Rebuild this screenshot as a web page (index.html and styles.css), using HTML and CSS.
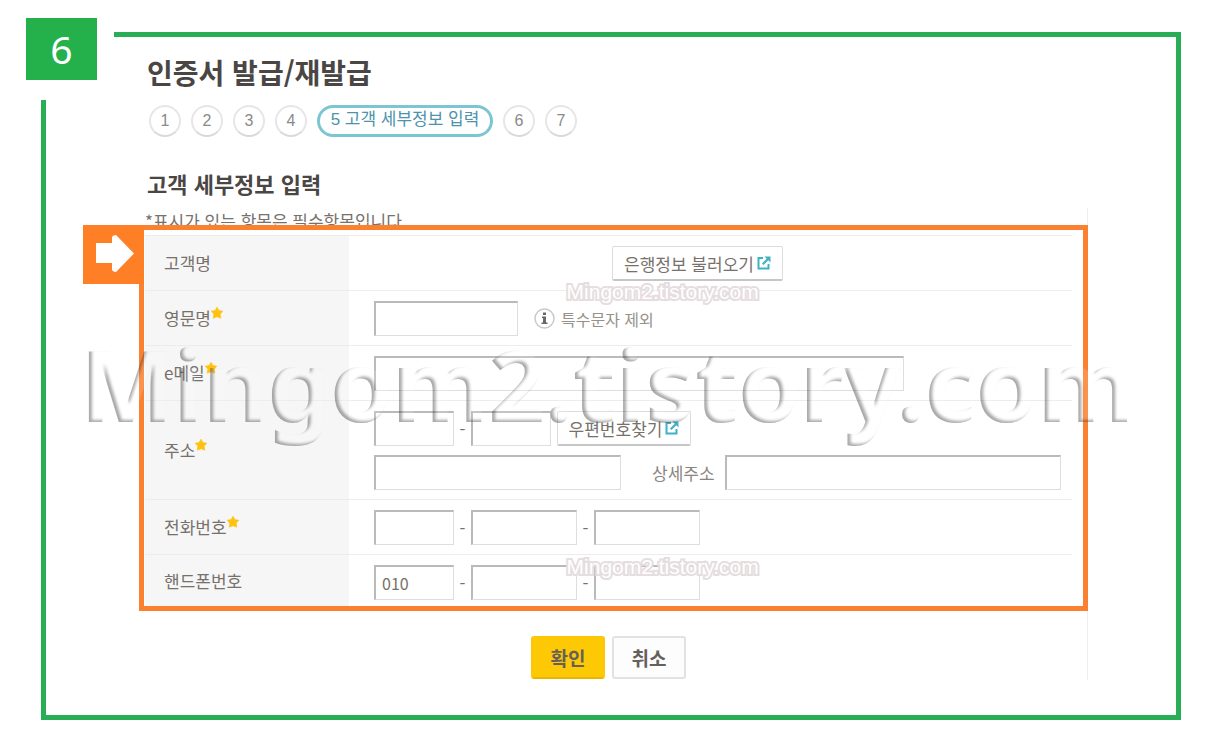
FILE: index.html
```
<!DOCTYPE html>
<html lang="ko">
<head>
	<meta charset="UTF-8">
	<title>인증서 발급/재발급</title>
	<link rel="stylesheet" href="styles.css">
</head>
<body>
	<svg class="defs" width="0" height="0" aria-hidden="true">
		<defs>
			<!-- 글자 안쪽 왼쪽/아래 그림자 -->
			<filter id="emboss" x="-2%" y="-5%" width="104%" height="110%" color-interpolation-filters="sRGB">
				<feGaussianBlur in="SourceAlpha" stdDeviation="1.5" result="blur"/>
				<feOffset in="blur" dx="3" dy="-2" result="moved"/>
				<feComposite in="SourceAlpha" in2="moved" operator="out" result="edge"/>
				<feFlood flood-color="#000" flood-opacity="0.34"/>
				<feComposite in2="edge" operator="in" result="dark"/>
				<feFlood flood-color="#fff" flood-opacity="0.15"/>
				<feComposite in2="SourceAlpha" operator="in" result="face"/>
				<feMerge>
					<feMergeNode in="face"/>
					<feMergeNode in="dark"/>
				</feMerge>
			</filter>
			<symbol id="star" viewBox="0 0 12 12">
				<path d="M6 .2 7.900 3.500 11.800 4.200 9.200 7.100 9.800 11.200 6 9.700 2.200 11.200 2.800 7.100 .2 4.200 4.100 3.500z" fill="#ffc20e" stroke="#ffc20e" stroke-linejoin="round" stroke-width=".6"/>
			</symbol>
			<symbol id="popup" viewBox="0 0 14 14">
				<path d="M6 2H1.500v10.500H11.500V8" fill="none" stroke="#3fb1c4" stroke-width="2"/>
				<path d="M7.500 0.500H13.500V6.500L11.300 4.300 6.500 9 5 7.500 9.700 2.700z" fill="#3fb1c4"/>
			</symbol>
		</defs>
	</svg>

	<div class="frame">
		<div class="badge"><span>6</span></div>

		<h1>인증서 발급/재발급</h1>
		<ol class="steps">
			<li>1</li>
			<li>2</li>
			<li>3</li>
			<li>4</li>
			<li class="on">5 고객 세부정보 입력</li>
			<li>6</li>
			<li>7</li>
		</ol>
		<h2>고객 세부정보 입력</h2>

		<form class="sheet">
			<p class="notice">*표시가 있는 항목은 필수항목입니다</p>

			<div class="box">
				<div class="pointer">
					<svg width="38" height="37" viewBox="0 0 38 37"><path d="M0 8H16V2Q17 0 20 0L38 18.500 20 37Q17 37 16 35V28H0z" fill="#fff"/></svg>
				</div>
				<table>
					<tr>
						<th scope="row">고객명</th>
						<td>
							<div class="fields">
								<button type="button" class="btn load">은행정보 불러오기<svg width="14" height="14"><use href="#popup"/></svg></button>
							</div>
						</td>
					</tr>
					<tr>
						<th scope="row"><label for="eng-name">영문명<svg class="star" width="12" height="12"><use href="#star"/></svg></label></th>
						<td>
							<div class="fields">
								<input type="text" id="eng-name" class="w-name">
								<span class="tip">
									<svg width="21" height="21" viewBox="0 0 21 21"><circle cx="10.500" cy="10.500" r="9.500" fill="#fff" stroke="#c9c9c9" stroke-width="1.500"/><path d="M9 4.500h3v2.500H9zM8 8.500h4v6h1.500V16H7.500v-1.500H9V10H8z" fill="#6d6864"/></svg>
									특수문자 제외
								</span>
							</div>
						</td>
					</tr>
					<tr>
						<th scope="row"><label for="email">e메일<svg class="star" width="12" height="12"><use href="#star"/></svg></label></th>
						<td>
							<div class="fields">
								<input type="text" id="email" class="w-email">
							</div>
						</td>
					</tr>
					<tr>
						<th scope="row"><label for="zip1">주소<svg class="star" width="12" height="12"><use href="#star"/></svg></label></th>
						<td>
							<div class="fields">
								<input type="text" id="zip1" class="w-short">
								<span class="dash">-</span>
								<input type="text" aria-label="우편번호 뒷자리" class="w-short">
								<button type="button" class="btn zip">우편번호찾기<svg width="14" height="14"><use href="#popup"/></svg></button>
							</div>
							<div class="fields">
								<input type="text" aria-label="주소" class="w-addr">
								<label for="addr-detail" class="detail">상세주소</label>
								<input type="text" id="addr-detail" class="w-rest">
							</div>
						</td>
					</tr>
					<tr>
						<th scope="row"><label for="tel1">전화번호<svg class="star" width="12" height="12"><use href="#star"/></svg></label></th>
						<td>
							<div class="fields">
								<input type="text" id="tel1" class="w-short">
								<span class="dash">-</span>
								<input type="text" aria-label="전화번호 가운데" class="w-tel">
								<span class="dash">-</span>
								<input type="text" aria-label="전화번호 끝" class="w-tel">
							</div>
						</td>
					</tr>
					<tr>
						<th scope="row"><label for="hp1">핸드폰번호</label></th>
						<td>
							<div class="fields">
								<input type="text" id="hp1" class="w-short" value="010">
								<span class="dash">-</span>
								<input type="text" aria-label="핸드폰번호 가운데" class="w-tel">
								<span class="dash">-</span>
								<input type="text" aria-label="핸드폰번호 끝" class="w-tel">
							</div>
						</td>
					</tr>
				</table>
				<span class="mark mark-top">Mingom2.tistory.com</span>
				<span class="mark mark-bottom">Mingom2.tistory.com</span>
			</div>

			<div class="actions">
				<button type="submit" class="ok">확인</button>
				<button type="button" class="cancel">취소</button>
			</div>
		</form>

		<div class="watermark">Mingom2.tistory.com</div>
	</div>
</body>
</html>
```
FILE: styles.css
```
*{
	box-sizing: border-box;
}
body,h1,h2,p,ol{
	margin: 0;
	padding: 0;
}
body{
	background: #fff;
	color: #77716c;
	font-family: "Noto Sans CJK KR", sans-serif;
	font-size: 17px;
}
input,button{
	font-family: inherit;
	font-size: inherit;
	color: inherit;
}
.defs{
	position: absolute;
}
.frame{
	position: relative;
	margin: 32px 40px 32px 41px;
	padding: 17px 88px 35px 93px;
	border: 5px solid #2aae55;
}

/* 번호 */
.badge{
	position: absolute;
	top: -19px;
	left: -20px;
	padding: 0 17px 20px 0;
	background: #fff;
}
.badge span{
	display: block;
	width: 71px;
	height: 62px;
	line-height: 62px;
	background: #24b14c;
	color: #fff;
	font-family: "Noto Sans", sans-serif;
	font-size: 39px;
	text-align: center;
}

h1,h2{
	padding-left: 8px;
	color: #4a4644;
	font-weight: bold;
}
h1{
	font-size: 28px;
	line-height: 36px;
}
.steps{
	display: flex;
	gap: 10px;
	margin: 15px 0 30px 10px;
	list-style: none;
}
.steps li{
	width: 32px;
	height: 32px;
	line-height: 28px;
	border: 2px solid #e6e6e6;
	border-bottom-color: #d9d9d9;
	border-radius: 16px;
	color: #8a8a8a;
	font-family: "Liberation Sans", "Noto Sans CJK KR", sans-serif;
	font-size: 16px;
	text-align: center;
}
.steps .on{
	width: 176px;
	line-height: 24px;
	border: 3px solid #7cc6d1;
	color: #4c93ab;
	font-size: 17px;
}
h2{
	font-size: 22px;
	line-height: 32px;
}

/* 입력 폼 */
.sheet{
	margin-top: 9px;
	border-right: 1px solid #eee;
}
.notice{
	height: 17px;
	padding-left: 6px;
	line-height: 26px;
}
.box{
	position: relative;
	margin-right: -1px;
	padding: 5px 11px 0 1px;
	border: 5px solid #fb8030;
	background: #fff;
}
.pointer{
	position: absolute;
	top: -5px;
	left: -61px;
	width: 61px;
	height: 59px;
	padding: 10px 0 0 13px;
	background: #ff7f27;
}
table{
	width: 100%;
	border-spacing: 0;
}
th,td{
	border-top: 1px solid #ececec;
}
th{
	width: 204px;
	padding: 0 0 0 19px;
	background: #f6f6f6;
	font-weight: normal;
	line-height: 26px;
	text-align: left;
}
td{
	padding: 10px 11px 9px 25px;
}
tr:last-child td{
	padding-bottom: 6px;
}
.star{
	vertical-align: 6px;
}
.fields{
	display: flex;
	align-items: center;
	height: 35px;
}
.fields + .fields{
	margin-top: 9px;
}
.fields input{
	height: 35px;
	padding: 0 6px;
	border: 1px solid #dedede;
	border-top: 2px solid #bababa;
	border-left: 2px solid #bababa;
	background: #fff;
	font-size: 16px;
}
.fields .w-name{ width: 144px; }
.fields .w-email{ width: 530px; }
.fields .w-short{ width: 80px; }
.fields .w-tel{ width: 106px; }
.fields .w-addr{ width: 247px; }
.fields .w-rest{
	flex: 1;
	min-width: 0;
}
.dash{
	width: 17px;
	text-align: center;
}
.detail{
	margin: 0 10px 0 31px;
	color: #8a857e;
}
.tip{
	display: flex;
	align-items: center;
	gap: 6px;
	margin-left: 16px;
	color: #96918a;
	font-size: 16px;
}
.btn{
	display: flex;
	align-items: center;
	justify-content: center;
	gap: 3px;
	height: 35px;
	padding: 0;
	border: 1px solid #dcdcdc;
	border-bottom: 2px solid #c6c6c6;
	border-radius: 2px;
	background: #fff;
	white-space: nowrap;
}
.load{
	width: 171px;
	margin-left: 238px;
}
.zip{
	width: 134px;
	margin-left: 6px;
}

.actions{
	display: flex;
	justify-content: center;
	gap: 7px;
	padding: 25px 9px 1px 0;
}
.actions button{
	width: 74px;
	height: 43px;
	padding: 0;
	border: 2px solid #e2e2e2;
	border-radius: 3px;
	background: #fdfdfd;
	color: #66605a;
	font-size: 19px;
	font-weight: bold;
}
.actions .ok{
	border-color: #fcc806;
	border-bottom-color: #e9b500;
	background: #fdc905;
}

/* 워터마크 */
.mark,.watermark{
	position: absolute;
	pointer-events: none;
	white-space: nowrap;
}
.mark{
	color: #fff;
	font-family: "Liberation Sans", sans-serif;
	font-size: 21px;
	line-height: 24px;
	-webkit-text-stroke: 4px #e6dddf;
	paint-order: stroke fill;
}
.mark-top{
	top: 50px;
	left: 45%;
}
.mark-bottom{
	bottom: 27px;
	left: 45%;
}
.watermark{
	top: 295px;
	left: 0;
	right: 8px;
	font-family: "Noto Sans", sans-serif;
	font-size: 99px;
	font-weight: bold;
	line-height: 104px;
	text-align: center;
	filter: url(#emboss);
}
```
